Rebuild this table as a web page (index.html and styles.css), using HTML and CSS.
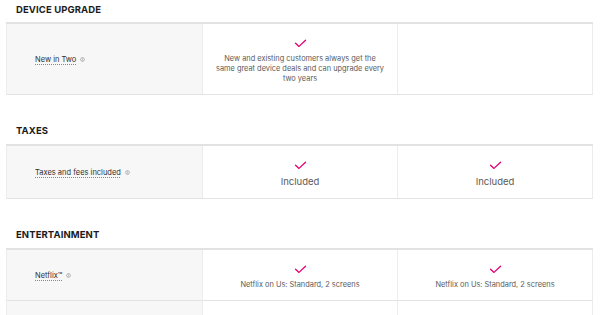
FILE: index.html
```html
<!DOCTYPE html>
<html>
<head>
<meta charset="utf-8">
<link rel="stylesheet" href="styles.css">
</head>
<body>
<div class="page">
  <section class="group">
    <h3 class="group-title">DEVICE UPGRADE</h3>
    <div class="grid">
      <div class="cell label-cell"><span class="label">New in Two</span><svg class="info" viewBox="0 0 10 10"><circle cx="5" cy="5" r="3.8" fill="none" stroke="#777" stroke-width="1"/><rect x="4.5" y="4.3" width="1" height="2.6" fill="#777"/><rect x="4.5" y="2.8" width="1" height="0.9" fill="#777"/></svg></div>
      <div class="cell val"><svg class="check" viewBox="0 0 14 10"><path d="M1.5 4.8 L5.3 8.2 L12.6 1.4" fill="none" stroke="#e20074" stroke-width="1.5" stroke-linecap="round" stroke-linejoin="round"/></svg><p class="small">New and existing customers always get the same great device deals and can upgrade every two years</p></div>
      <div class="cell val"></div>
    </div>
  </section>
  <section class="group">
    <h3 class="group-title">TAXES</h3>
    <div class="grid">
      <div class="cell label-cell"><span class="label">Taxes and fees included</span><svg class="info" viewBox="0 0 10 10"><circle cx="5" cy="5" r="3.8" fill="none" stroke="#777" stroke-width="1"/><rect x="4.5" y="4.3" width="1" height="2.6" fill="#777"/><rect x="4.5" y="2.8" width="1" height="0.9" fill="#777"/></svg></div>
      <div class="cell val"><svg class="check" viewBox="0 0 14 10"><path d="M1.5 4.8 L5.3 8.2 L12.6 1.4" fill="none" stroke="#e20074" stroke-width="1.5" stroke-linecap="round" stroke-linejoin="round"/></svg><p class="medium">Included</p></div>
      <div class="cell val"><svg class="check" viewBox="0 0 14 10"><path d="M1.5 4.8 L5.3 8.2 L12.6 1.4" fill="none" stroke="#e20074" stroke-width="1.5" stroke-linecap="round" stroke-linejoin="round"/></svg><p class="medium">Included</p></div>
    </div>
  </section>
  <section class="group">
    <h3 class="group-title">ENTERTAINMENT</h3>
    <div class="grid">
      <div class="cell label-cell"><span class="label">Netflix™</span><svg class="info" viewBox="0 0 10 10"><circle cx="5" cy="5" r="3.8" fill="none" stroke="#777" stroke-width="1"/><rect x="4.5" y="4.3" width="1" height="2.6" fill="#777"/><rect x="4.5" y="2.8" width="1" height="0.9" fill="#777"/></svg></div>
      <div class="cell val"><svg class="check" viewBox="0 0 14 10"><path d="M1.5 4.8 L5.3 8.2 L12.6 1.4" fill="none" stroke="#e20074" stroke-width="1.5" stroke-linecap="round" stroke-linejoin="round"/></svg><p class="small">Netflix on Us: Standard, 2 screens</p></div>
      <div class="cell val"><svg class="check" viewBox="0 0 14 10"><path d="M1.5 4.8 L5.3 8.2 L12.6 1.4" fill="none" stroke="#e20074" stroke-width="1.5" stroke-linecap="round" stroke-linejoin="round"/></svg><p class="small">Netflix on Us: Standard, 2 screens</p></div>
      <div class="cell label-cell next"></div>
      <div class="cell val next"></div>
      <div class="cell val next"></div>
    </div>
  </section>
</div>
</body>
</html>
```

FILE: styles.css
```css
* { box-sizing: border-box; }
html, body { margin: 0; padding: 0; background: #fff; }
body { font-family: Inter, "Noto Sans", sans-serif; color: #333; overflow: hidden; }
.page { padding: 0 7px 0 6px; }
.group { margin: 0; }
.group-title {
  margin: 0;
  padding: 4px 10px 0 10px;
  height: 22px;
  font-size: 9.5px;
  line-height: 12px;
  font-weight: 700;
  letter-spacing: 0.1px;
  color: #1b1b1b;
}
.group + .group .group-title { height: 49px; padding-top: 30px; }
.grid {
  display: grid;
  grid-template-columns: 197px 1fr 1fr;
  border-top: 2px solid #e2e2e2;
}
.cell {
  border-right: 1px solid #ececec;
  border-bottom: 1px solid #e3e3e3;
  padding: 15px 12px 10px;
}
.cell:nth-child(3n+1) { border-left: 1px solid #ececec; }
.label-cell {
  background: #f7f7f7;
  display: flex;
  align-items: center;
  padding: 12px 12px 12px 28px;
}
.label {
  font-size: 7.5px;
  color: #2e2e2e;
  text-decoration: underline dotted #888;
  text-underline-offset: 2px;
}
.info { width: 5px; height: 5px; margin-left: 4px; }
.val {
  display: flex;
  flex-direction: column;
  align-items: center;
  justify-content: center;
  text-align: center;
}
.check { width: 13px; height: 9px; margin-bottom: 6px; }
.small { margin: 0; font-size: 7.4px; line-height: 10px; color: #5a5a5a; }
.medium { margin: 0; font-size: 9.5px; line-height: 12px; color: #5a5a5a; }
.next { min-height: 30px; }
```
